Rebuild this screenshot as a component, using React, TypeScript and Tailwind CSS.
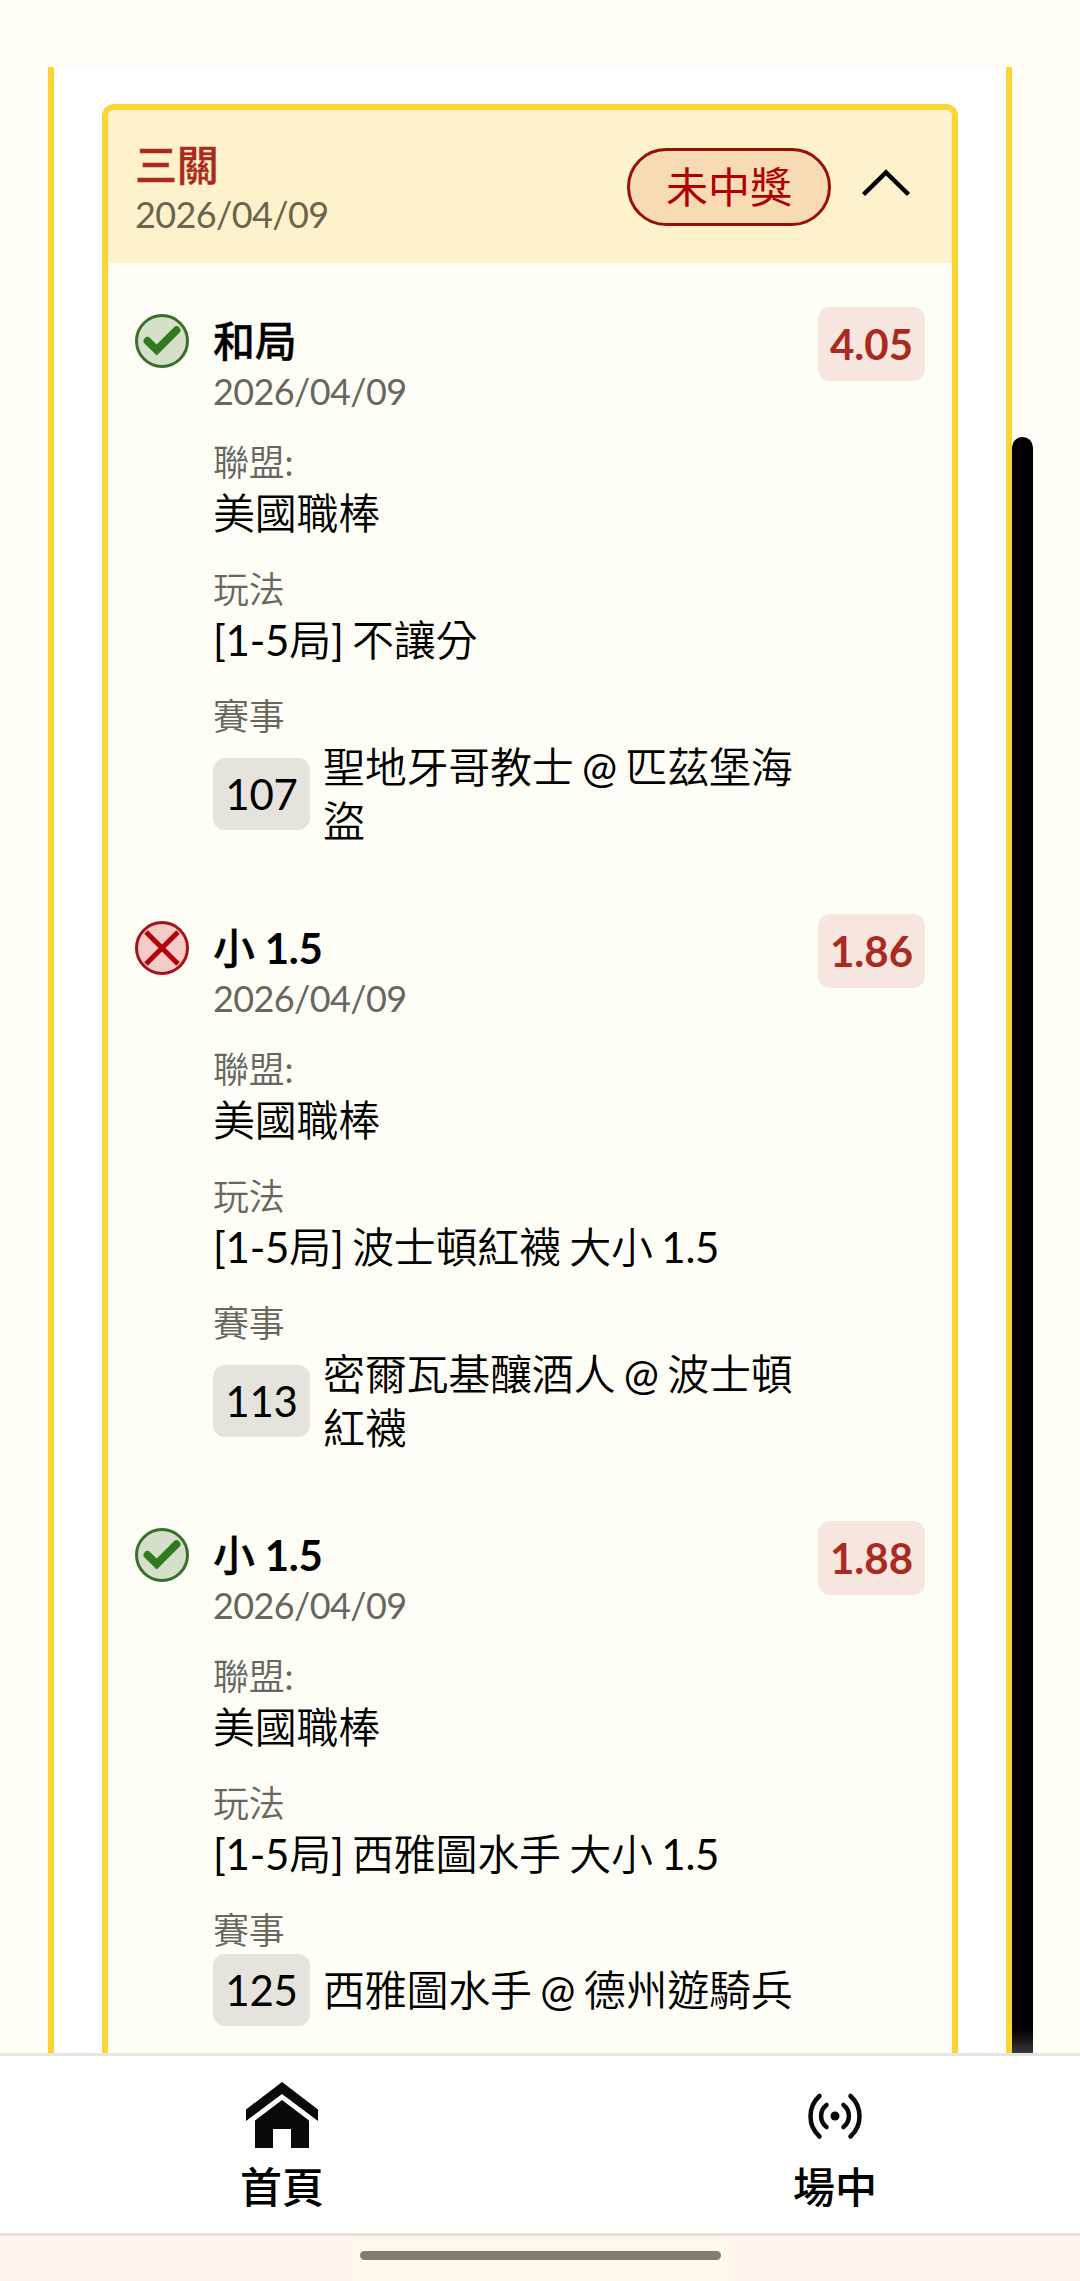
type Pick = {
  won: boolean;
  title: string;
  line?: string;
  odds: string;
  play: string;
  code: string;
  match: string;
};

const DATE = "2026/04/09";

const picks: Pick[] = [
  { won: true, title: "和局", odds: "4.05", play: "[1-5局] 不讓分", code: "107", match: "聖地牙哥教士 @ 匹茲堡海盜" },
  { won: false, title: "小", line: "1.5", odds: "1.86", play: "[1-5局] 波士頓紅襪 大小 1.5", code: "113", match: "密爾瓦基釀酒人 @ 波士頓紅襪" },
  { won: true, title: "小", line: "1.5", odds: "1.88", play: "[1-5局] 西雅圖水手 大小 1.5", code: "125", match: "西雅圖水手 @ 德州遊騎兵" },
];

function ResultIcon({ won }: { won: boolean }) {
  return won ? (
    <svg className="mt-[7px] size-[54px] shrink-0" viewBox="0 0 54 54" fill="none">
      <circle cx="27" cy="27" r="25.5" fill="#d5dfca" stroke="#3a6e2d" strokeWidth="3" />
      <path d="M12.500 27L21.700 36L41.500 16.200" stroke="#327a1e" strokeWidth="7.800" strokeLinecap="round" />
    </svg>
  ) : (
    <svg className="mt-[7px] size-[54px] shrink-0" viewBox="0 0 54 54" fill="none">
      <circle cx="27" cy="27" r="25.500" fill="#f4cbc7" stroke="#a31219" strokeWidth="3" />
      <path d="M11 11L43 43M43 11L11 43" stroke="#b00008" strokeWidth="5" />
    </svg>
  );
}

function Label({ children }: { children: string }) {
  return <div className="mt-[27px] text-[36px] leading-[44px] text-[#68665f]">{children}</div>;
}

function PickRow({ pick }: { pick: Pick }) {
  return (
    <div className="flex items-start">
      <ResultIcon won={pick.won} />
      <div className="ml-6 min-w-0 flex-1 pt-[7px] text-[42px] leading-[54px] tracking-[-0.25px] text-black [word-spacing:-2px]">
        <div>
          <span className="font-medium [-webkit-text-stroke:0.3px_#000]">{pick.title}</span>
          {pick.line && <span className="font-bold [word-spacing:0px]"> {pick.line}</span>}
        </div>
        <div className="mt-px text-[36px] leading-[44px] tracking-[-0.6px] text-[#68665f]">{DATE}</div>
        <div className="font-['Lato','Noto_Sans_CJK_TC_DemiLight','Noto_Sans_CJK_TC',sans-serif]">
          <Label>聯盟:</Label>
          <div className="mt-[2px]">美國職棒</div>
          <Label>玩法</Label>
          <div className="mt-[2px]">{pick.play}</div>
          <Label>賽事</Label>
          <div className="mt-[2px] flex items-center gap-[13px]">
            <span className="w-[97px] shrink-0 rounded-xl bg-[#e6e3dd] text-center leading-[72px]">{pick.code}</span>
            <span className="min-w-0">{pick.match}</span>
          </div>
        </div>
      </div>
      <div className="ml-6 w-[107px] shrink-0 rounded-xl bg-[#f7e6df] text-center text-[42px] leading-[74px] font-bold text-[#ab2a20]">
        {pick.odds}
      </div>
    </div>
  );
}

export default function App() {
  return (
    <div
      lang="zh-Hant"
      className="relative flex h-[2281px] w-[1080px] flex-col overflow-hidden bg-[#fffdf5] font-['Lato','Noto_Sans_CJK_TC',sans-serif]"
    >
      <main className="flex h-[2053px] shrink-0 overflow-hidden pt-[67px] pl-12">
        <section className="h-full w-[964px] border-x-6 border-[#fad534] bg-white px-12 pt-[37px]">
          <article className="h-[2100px] rounded-t-xl border-6 border-[#fad534] bg-[#fffef6]">
            <header className="flex h-[153px] items-center rounded-t-md bg-[#fef2cc] px-[27px]">
              <div className="flex-1">
                <h2 className="pt-px text-[42px] leading-[54px] font-medium tracking-[-0.25px] text-[#ab2a20] [-webkit-text-stroke:0.3px_#ab2a20]">
                  三關
                </h2>
                <p className="text-[36px] leading-[44px] tracking-[-0.6px] text-[#6b634c]">{DATE}</p>
              </div>
              <span className="flex h-[78px] w-[204px] items-center justify-center rounded-full border-3 border-[#990f08] bg-[#f8dbb5] text-[42px] leading-[54px] text-[#b00000]">
                未中獎
              </span>
              <svg className="ml-4 h-[54px] w-[78px]" viewBox="0 0 78 54" fill="none">
                <path d="M16.500 34.500L39 12.500L61.500 34.500" stroke="#000" strokeWidth="4.500" />
              </svg>
            </header>
            <div className="flex flex-col gap-[66px] px-[27px] pt-11">
              {picks.map((p) => (
                <PickRow key={p.code} pick={p} />
              ))}
            </div>
          </article>
        </section>
      </main>
      <div className="absolute top-[437px] left-[1012px] h-[1616px] w-[21px] rounded-t-full bg-linear-to-b from-black from-98% to-[#3a3a3a]" />
      <nav className="flex h-[183px] shrink-0 justify-between border-y-3 border-t-[#e5e5e5] border-b-[#e8e2d3] bg-white pr-[145px] pl-[182px] text-[42px] leading-[54px] font-medium text-black">
        <div className="flex w-[200px] flex-col items-center pt-[26px]">
          <svg className="h-[66px] w-[72px]" viewBox="0 0 72 66" fill="#0a0a0a">
            <path d="M36 0L72 27.500V39L36 12L0 39V27.500Z" />
            <path d="M36 18L63 38.500V66H45V47H27V66H9V38.500Z" />
          </svg>
          <span className="mt-3">首頁</span>
        </div>
        <div className="flex w-[200px] flex-col items-center pt-[26px]">
          <svg
            className="h-[66px] w-[72px]"
            viewBox="0 0 72 66"
            fill="none"
            stroke="#0a0a0a"
            strokeWidth="4.500"
            strokeLinecap="round"
          >
            <path d="M20.500 14A27.300 27.300 0 0 0 20.500 54.500M51.500 14A27.300 27.300 0 0 1 51.500 54.500" />
            <path d="M27.500 23A13.900 13.900 0 0 0 27.500 45M44.500 23A13.900 13.900 0 0 1 44.500 45" />
            <circle cx="36" cy="34" r="4.500" fill="#0a0a0a" stroke="none" />
          </svg>
          <span className="mt-3">場中</span>
        </div>
      </nav>
      <footer className="flex flex-1 justify-center bg-[#fff5ec]">
        <div className="flex w-[380px] justify-center bg-[#fff8ed] pt-[15px]">
          <div className="h-[9px] w-[361px] rounded-full bg-[#7f7c72]" />
        </div>
      </footer>
    </div>
  );
}
